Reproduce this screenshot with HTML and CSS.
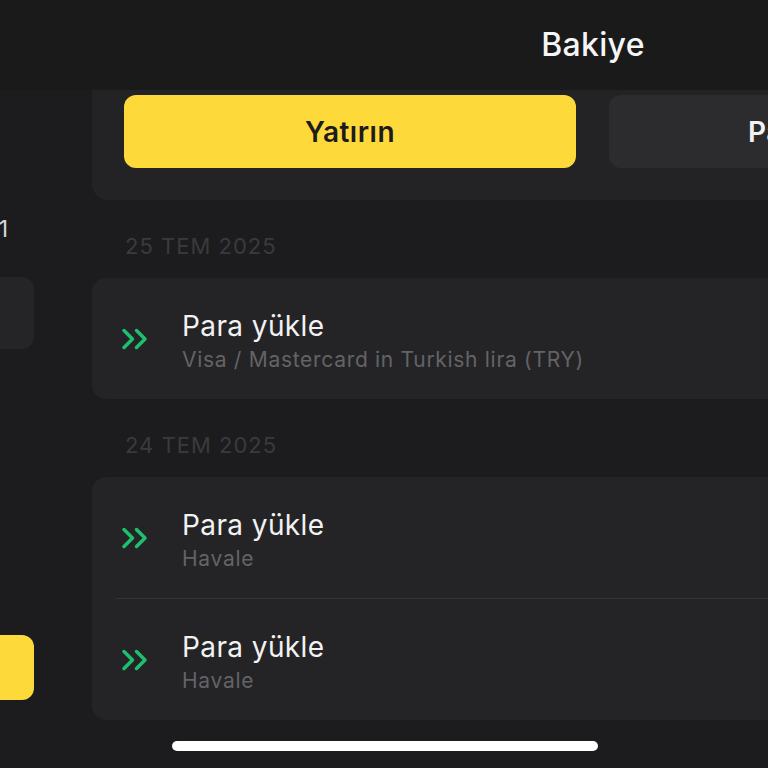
FILE: index.html
```html
<!DOCTYPE html>
<html lang="tr">
<head>
<meta charset="utf-8">
<link rel="stylesheet" href="styles.css">
</head>
<body>
<div class="app">
  <aside class="sidebar">
    <div class="side-num">1</div>
    <div class="side-card"></div>
    <div class="side-btn"></div>
  </aside>
  <main class="main">
    <header class="header">Bakiye</header>
    <section class="actions">
      <button class="btn btn-primary">Yatırın</button>
      <button class="btn btn-secondary">Para çekin</button>
    </section>
    <div class="date">25 TEM 2025</div>
    <div class="card">
      <div class="row">
        <svg class="icon" viewBox="0 0 30 24" width="30" height="24"><path d="M3 3.5 L11.5 12 L3 20.5 M15.5 3.5 L24 12 L15.5 20.5"/></svg>
        <div class="texts">
          <div class="title">Para yükle</div>
          <div class="sub">Visa / Mastercard in Turkish lira (TRY)</div>
        </div>
      </div>
    </div>
    <div class="date">24 TEM 2025</div>
    <div class="card">
      <div class="row">
        <svg class="icon" viewBox="0 0 30 24" width="30" height="24"><path d="M3 3.5 L11.5 12 L3 20.5 M15.5 3.5 L24 12 L15.5 20.5"/></svg>
        <div class="texts">
          <div class="title">Para yükle</div>
          <div class="sub">Havale</div>
        </div>
      </div>
      <div class="sep"></div>
      <div class="row">
        <svg class="icon" viewBox="0 0 30 24" width="30" height="24"><path d="M3 3.5 L11.5 12 L3 20.5 M15.5 3.5 L24 12 L15.5 20.5"/></svg>
        <div class="texts">
          <div class="title">Para yükle</div>
          <div class="sub">Havale</div>
        </div>
      </div>
    </div>
  </main>
</div>
<div class="home-indicator"></div>
</body>
</html>
```
FILE: styles.css
```css
html, body {
  margin: 0;
  padding: 0;
  width: 768px;
  height: 768px;
  overflow: hidden;
  background: #1c1c1e;
  font-family: Inter, "Noto Sans", sans-serif;
}
.app {
  display: flex;
  align-items: flex-start;
  width: 768px;
  height: 768px;
  background: linear-gradient(#1a1a1b 0, #1a1a1b 90px, #1c1c1e 90px);
}
.sidebar {
  flex: none;
  width: 200px;
  margin-left: -166px;
  display: flex;
  flex-direction: column;
  align-items: flex-end;
}
.side-num {
  margin-top: 214px;
  height: 30px;
  line-height: 30px;
  font-size: 23px;
  color: #d8d8d8;
  width: 200px;
  text-align: right;
  margin-right: 26px;
}
.side-card {
  margin-top: 33px;
  width: 200px;
  height: 72px;
  border-radius: 12px;
  background: #252527;
}
.side-btn {
  margin-top: 286px;
  width: 200px;
  height: 65px;
  border-radius: 12px;
  background: #fed93a;
}
.main {
  flex: none;
  width: 1002px;
  margin-left: 58px;
}
.header {
  height: 90px;
  line-height: 90px;
  text-align: center;
  font-size: 32px;
  font-weight: 500;
  letter-spacing: 0.3px;
  color: #f5f5f5;
}
.actions {
  display: flex;
  gap: 33px;
  padding: 5px 32px 32px;
  background: #232325;
  border-radius: 0 0 16px 16px;
}
.btn {
  height: 73px;
  border: none;
  border-radius: 12px;
  font-family: inherit;
  font-size: 28px;
  font-weight: 600;
  letter-spacing: 0.5px;
  padding: 0;
}
.btn-primary {
  flex: none;
  width: 452px;
  background: #fed93a;
  color: #1c1c1e;
}
.btn-secondary {
  flex: 1;
  background: #2c2c2e;
  color: #f2f2f2;
  text-align: left;
  padding-left: 139px;
  white-space: nowrap;
  overflow: hidden;
}
.date {
  padding: 31px 0 0 33px;
  margin-bottom: 17px;
  height: 30px;
  line-height: 30px;
  font-size: 22px;
  color: #3a3a3c;
  letter-spacing: 1px;
}
.card {
  background: #242426;
  border-radius: 14px;
}
.row {
  display: flex;
  align-items: center;
  height: 121px;
  padding-left: 29px;
  box-sizing: border-box;
}
.icon {
  flex: none;
  fill: none;
  stroke: #1fbf70;
  stroke-width: 3.5;
  stroke-linecap: round;
  stroke-linejoin: round;
}
.texts {
  margin-left: 31px;
  margin-top: 6px;
  display: flex;
  flex-direction: column;
}
.title {
  font-size: 28px;
  line-height: 32px;
  letter-spacing: 0.4px;
  color: #f2f2f2;
}
.sub {
  margin-top: 5px;
  font-size: 21px;
  line-height: 26px;
  color: #636366;
  letter-spacing: 0.7px;
}
.sep {
  height: 1px;
  margin-left: 24px;
  background: #343436;
}
.home-indicator {
  position: absolute;
  left: 172px;
  top: 741px;
  width: 426px;
  height: 10px;
  border-radius: 5px;
  background: #ffffff;
}
```
